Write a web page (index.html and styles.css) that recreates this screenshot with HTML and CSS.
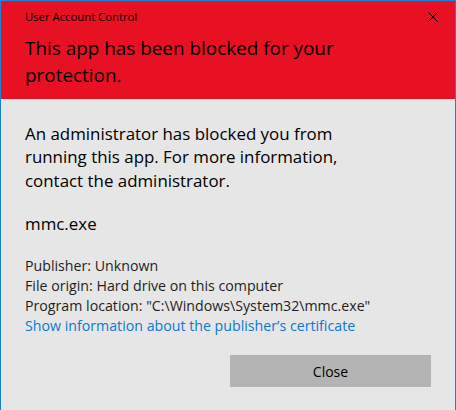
FILE: index.html
```html
<!DOCTYPE html>
<html>
<head>
<meta charset="utf-8">
<link rel="stylesheet" href="styles.css">
</head>
<body>
<div class="window">
  <div class="header">
    <div class="titlebar">
      <span class="title">User Account Control</span>
      <svg class="close-x" width="10" height="10" viewBox="0 0 10 10"><path d="M0.5 0.5 L9.5 9.5 M9.5 0.5 L0.5 9.5" stroke="#000" stroke-width="1" fill="none"/></svg>
    </div>
    <div class="heading">This app has been blocked for your protection.</div>
  </div>
  <div class="content">
    <p class="message">An administrator has blocked you from running this app. For more information, contact the administrator.</p>
    <p class="filename">mmc.exe</p>
    <div class="details">
      <div>Publisher: Unknown</div>
      <div>File origin: Hard drive on this computer</div>
      <div>Program location: "C:\Windows\System32\mmc.exe"</div>
      <a class="link" href="#">Show information about the publisher’s certificate</a>
    </div>
    <div class="actions">
      <button class="btn">Close</button>
    </div>
  </div>
</div>
</body>
</html>
```
FILE: styles.css
```css
html, body {
  margin: 0;
  padding: 0;
  background: #e6e6e6;
}
body {
  font-family: "Open Sans", sans-serif;
  color: #000;
}
.window {
  width: 456px;
  height: 410px;
  box-sizing: border-box;
  border: 1px solid #1883d7;
  border-bottom: none;
  background: #e6e6e6;
  display: flex;
  flex-direction: column;
}
.header {
  background: #e81123;
  height: 98px;
  box-sizing: border-box;
  padding: 7px 0 0 24px;
}
.titlebar {
  display: flex;
  justify-content: space-between;
  align-items: flex-start;
}
.title {
  font-size: 11.3px;
  line-height: 17px;
  color: #000;
}
.close-x {
  margin: 4px 17px 0 0;
}
.heading {
  margin-top: 9.5px;
  font-size: 18.9px;
  line-height: 27px;
  width: 330px;
  color: #000;
}
.content {
  padding: 22.5px 24px 0 24px;
}
.message {
  margin: 0;
  font-size: 16.9px;
  line-height: 23.5px;
  width: 330px;
}
.filename {
  margin: 19.5px 0 0 0;
  font-size: 16.9px;
  line-height: 23.5px;
}
.details {
  margin-top: 21px;
  font-size: 14.2px;
  line-height: 20px;
  color: #1e1e1e;
}
.link {
  display: block;
  color: #0a78d4;
  text-decoration: none;
}
.actions {
  margin-top: 19px;
  display: flex;
  justify-content: flex-end;
}
.btn {
  width: 201px;
  height: 32px;
  border: none;
  background: #b4b4b4;
  font-family: inherit;
  font-size: 14px;
  color: #000;
  padding: 0;
}
```
